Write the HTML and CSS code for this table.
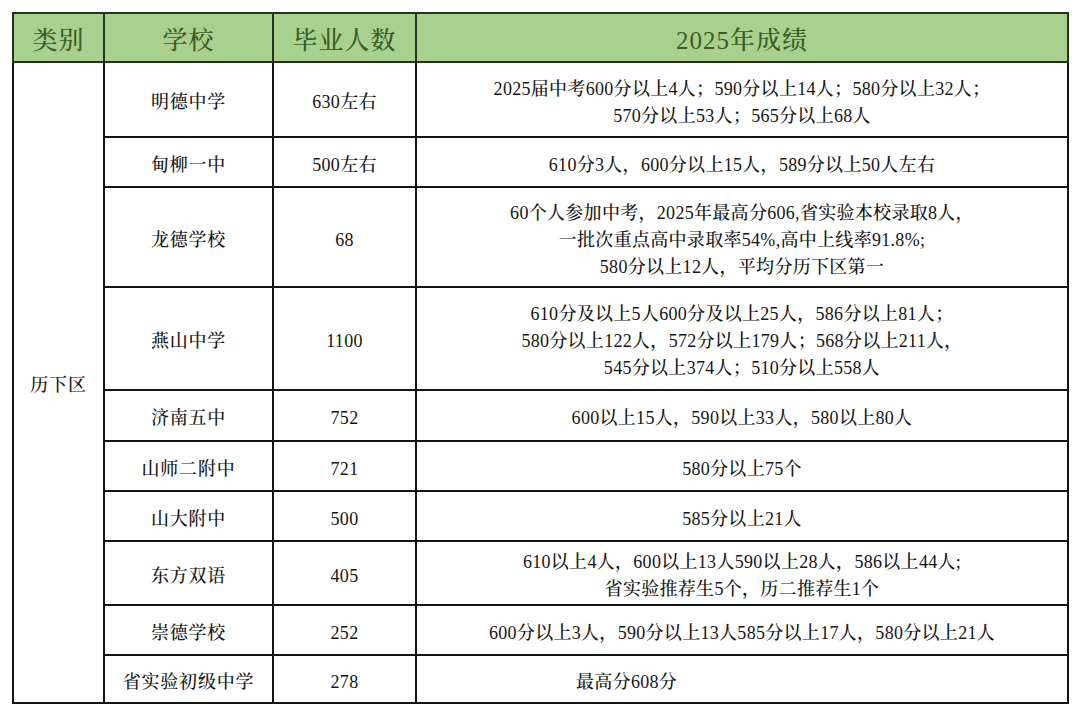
FILE: index.html
```html
<!DOCTYPE html>
<html lang="zh">
<head>
<meta charset="utf-8">
<link rel="stylesheet" href="styles.css">
</head>
<body>
<table class="grid">
  <colgroup>
    <col class="c-cat"><col class="c-school"><col class="c-num"><col class="c-res">
  </colgroup>
  <thead>
    <tr class="h-head">
      <th>类别</th><th>学校</th><th>毕业人数</th><th>2025年成绩</th>
    </tr>
  </thead>
  <tbody>
    <tr class="h75">
      <td class="cat" rowspan="10">历下区</td>
      <td class="school">明德中学</td><td>630左右</td>
      <td>2025届中考600分以上4人；590分以上14人；580分以上32人；<br>570分以上53人；565分以上68人</td>
    </tr>
    <tr class="h50"><td class="school">甸柳一中</td><td>500左右</td><td>610分3人，600分以上15人，589分以上50人左右</td></tr>
    <tr class="h100"><td class="school">龙德学校</td><td>68</td>
      <td>60个人参加中考，2025年最高分606,省实验本校录取8人，<br>一批次重点高中录取率54%,高中上线率91.8%;<br>580分以上12人，平均分历下区第一</td></tr>
    <tr class="h103"><td class="school">燕山中学</td><td>1100</td>
      <td>610分及以上5人600分及以上25人，586分以上81人；<br>580分以上122人，572分以上179人；568分以上211人，<br>545分以上374人；510分以上558人</td></tr>
    <tr class="h51"><td class="school">济南五中</td><td>752</td><td>600以上15人，590以上33人，580以上80人</td></tr>
    <tr class="h50"><td class="school">山师二附中</td><td>721</td><td>580分以上75个</td></tr>
    <tr class="h50"><td class="school">山大附中</td><td>500</td><td>585分以上21人</td></tr>
    <tr class="h64"><td class="school">东方双语</td><td>405</td>
      <td>610以上4人，600以上13人590以上28人，586以上44人;<br>省实验推荐生5个，历二推荐生1个</td></tr>
    <tr class="h50"><td class="school">崇德学校</td><td>252</td><td>600分以上3人，590分以上13人585分以上17人，580分以上21人</td></tr>
    <tr class="h48"><td class="school">省实验初级中学</td><td>278</td><td class="shift">最高分608分</td></tr>
  </tbody>
</table>
</body>
</html>
```

FILE: styles.css
```css
html, body {
  margin: 0;
  padding: 0;
  background: #ffffff;
}
body {
  padding: 12px 0 0 12px;
  font-family: "Liberation Serif", "Noto Serif CJK SC", "Noto Sans CJK SC", serif;
  color: #151515;
}
.grid {
  border-collapse: collapse;
  table-layout: fixed;
  width: 1055px;
}
.c-cat { width: 91px; }
.c-school { width: 169px; }
.c-num { width: 143px; }
.c-res { width: 652px; }

.grid th {
  background: #a9d08e;
  color: #3a5e24;
  font-size: 25px;
  font-weight: 500;
  border: 2px solid #23341c;
  height: 47px;
  padding: 0;
  text-align: center;
  letter-spacing: 1px;
}
.grid td {
  border: 2px solid #141414;
  font-size: 18px;
  font-weight: 500;
  line-height: 27px;
  text-align: center;
  padding: 6px 0 0 0;
  letter-spacing: 0.3px;
}
.grid td.school { letter-spacing: 0.8px; }
.grid td.cat { vertical-align: middle; letter-spacing: 0.8px; }
.grid td.shift { text-align: left; padding-left: 159px; }

.h75 { height: 75px; }
.h50 { height: 50px; }
.h100 { height: 100px; }
.h103 { height: 103px; }
.h51 { height: 51px; }
.h64 { height: 64px; }
.h48 { height: 48px; }
```
